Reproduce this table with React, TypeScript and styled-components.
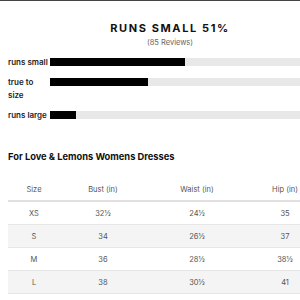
import React from 'react'
import styled, { createGlobalStyle } from 'styled-components'

const GlobalStyle = createGlobalStyle`
  body {
    margin: 0;
    background: #fff;
    font-family: Inter, "Open Sans", sans-serif;
    color: #222;
  }
`

const Page = styled.div`
  width: 324px;
  padding: 0 8px;
  border-top: 1px solid #444;
`

const FitHeader = styled.div`
  display: flex;
  flex-direction: column;
  align-items: center;
  padding-top: 20px;
`

const FitTitle = styled.h2`
  margin: 0;
  font-size: 11px;
  font-weight: 700;
  letter-spacing: 1.6px;
  color: #111;
  line-height: 14px;
`

const ReviewCount = styled.span`
  margin-top: 2px;
  font-size: 7.5px;
  color: #666;
  line-height: 12px;
`

const Bars = styled.div`
  display: flex;
  flex-direction: column;
  gap: 7px;
  margin-top: 7px;
`

const BarRow = styled.div`
  display: flex;
  align-items: flex-start;
`

const BarLabel = styled.span`
  width: 42px;
  padding-right: 2px;
  box-sizing: border-box;
  flex-shrink: 0;
  font-size: 8px;
  font-weight: 600;
  line-height: 13px;
  color: #222;
`

const Track = styled.div`
  flex: 1;
  height: 8px;
  margin-top: 2px;
  background: #e8e8e8;
`

const Fill = styled.div`
  height: 100%;
  background: #000;
`

const SectionTitle = styled.h3`
  margin: 28px 0 0;
  font-size: 9.3px;
  font-weight: 700;
  color: #111;
  line-height: 14px;
`

const Table = styled.table`
  margin-top: 14px;
  border-collapse: collapse;
  table-layout: fixed;
  width: 314px;
  font-size: 7.5px;
  color: #555;
`

const HeadCell = styled.th<{ $w: number }>`
  width: ${(p) => p.$w}px;
  font-weight: 400;
  height: 22px;
  padding: 0;
  text-align: center;
  border-bottom: 2px solid #e0e0e0;
`

const Row = styled.tr<{ $shade?: boolean }>`
  background: ${(p) => (p.$shade ? '#f4f4f4' : '#fff')};
  border-bottom: 1px solid #e6e6e6;
`

const Cell = styled.td`
  height: 22px;
  padding: 0;
  text-align: center;
`

const fit = [
  { label: 'runs small', pct: 48 },
  { label: 'true to size', pct: 34.8 },
  { label: 'runs large', pct: 9.3 },
]

const columns = [
  { name: 'Size', w: 52 },
  { name: 'Bust (in)', w: 86 },
  { name: 'Waist (in)', w: 102 },
  { name: 'Hip (in)', w: 74 },
]

const sizes = [
  ['XS', '32½', '24½', '35'],
  ['S', '34', '26½', '37'],
  ['M', '36', '28½', '38½'],
  ['L', '38', '30½', '41'],
  ['XL', '40', '32½', '43'],
]

export default function App() {
  return (
    <>
      <GlobalStyle />
      <Page>
        <FitHeader>
          <FitTitle>RUNS SMALL 51%</FitTitle>
          <ReviewCount>(85 Reviews)</ReviewCount>
        </FitHeader>
        <Bars>
          {fit.map((f) => (
            <BarRow key={f.label}>
              <BarLabel>{f.label}</BarLabel>
              <Track>
                <Fill style={{ width: `${f.pct}%` }} />
              </Track>
            </BarRow>
          ))}
        </Bars>
        <SectionTitle>For Love &amp; Lemons Womens Dresses</SectionTitle>
        <Table>
          <thead>
            <tr>
              {columns.map((c) => (
                <HeadCell key={c.name} $w={c.w}>
                  {c.name}
                </HeadCell>
              ))}
            </tr>
          </thead>
          <tbody>
            {sizes.map((r, i) => (
              <Row key={r[0]} $shade={i % 2 === 1}>
                {r.map((v, j) => (
                  <Cell key={j}>{v}</Cell>
                ))}
              </Row>
            ))}
          </tbody>
        </Table>
      </Page>
    </>
  )
}
